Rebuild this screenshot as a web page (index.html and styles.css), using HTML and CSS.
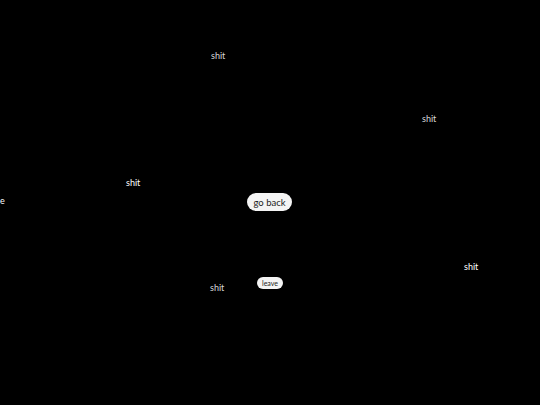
FILE: index.html
```html
<!DOCTYPE html>
<html>
<head>
<meta charset="utf-8">
<link rel="stylesheet" href="styles.css">
</head>
<body>
<div class="canvas">
  <span class="word dim" style="left:211px;top:51px">shit</span>
  <span class="word dim" style="left:422px;top:114px">shit</span>
  <span class="word" style="left:126px;top:178px">shit</span>
  <span class="word" style="left:464px;top:262px">shit</span>
  <span class="word dim" style="left:210px;top:283px">shit</span>
  <span class="word" style="left:0px;top:196px">e</span>
  <button class="btn back">go back</button>
  <button class="btn leave">leave</button>
</div>
</body>
</html>
```
FILE: styles.css
```css
html, body {
  margin: 0;
  padding: 0;
  background: #000;
  width: 540px;
  height: 405px;
  overflow: hidden;
}
.canvas {
  position: relative;
  width: 540px;
  height: 405px;
  font-family: "Lato", "DejaVu Sans", sans-serif;
}
.word {
  position: absolute;
  color: #fff;
  font-size: 9px;
  line-height: 10px;
  white-space: nowrap;
}
.word.dim {
  color: #d8d8d8;
}
.btn {
  position: absolute;
  background: #f4f4f4;
  color: #222;
  border: none;
  padding: 0;
  font-family: "Lato", "DejaVu Sans", sans-serif;
  border-radius: 999px;
  text-align: center;
}
.back {
  left: 247px;
  top: 193px;
  width: 45px;
  height: 18px;
  font-size: 9.5px;
}
.leave {
  left: 257px;
  top: 277px;
  width: 26px;
  height: 12px;
  font-size: 7px;
}
```
